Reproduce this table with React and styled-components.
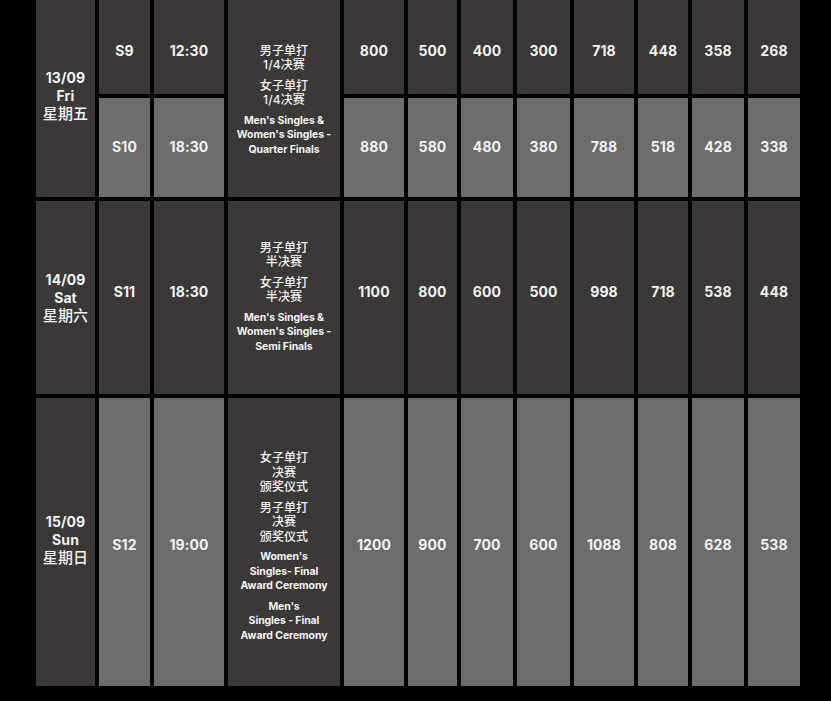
import React from 'react'
import styled, { createGlobalStyle } from 'styled-components'

const GlobalStyle = createGlobalStyle`
  html, body {
    margin: 0;
    padding: 0;
    background: #000;
  }
  body {
    font-family: Inter, "Noto Sans CJK SC", sans-serif;
    color: #f2f2f2;
  }
`

const DARK = '#3c3837'
const LIGHT = '#6d6c6c'

const Page = styled.div`
  width: 831px;
  height: 701px;
  background: #000;
  overflow: hidden;
`

const Grid = styled.div`
  display: grid;
  margin-left: 36px;
  grid-template-columns: 59px 51px 70px 112px 60px 49px 52px 53px 60px 50px 52px 52px;
  grid-template-rows: 94px 99px 193px 288px;
  gap: 4px;
`

// $shift moves the content off the vertical centre, as the original layout does
const Cell = styled.div`
  display: flex;
  flex-direction: column;
  align-items: center;
  justify-content: center;
  text-align: center;
  background: ${p => (p.$light ? LIGHT : DARK)};
  grid-row: ${p => p.$rows || 'auto'};
  padding-top: ${p => Math.max(0, 2 * (p.$shift || 0))}px;
  padding-bottom: ${p => Math.max(0, -2 * (p.$shift || 0))}px;
  font-weight: 700;
  font-size: 14px;
  letter-spacing: 0.1px;
`

const DateLine = styled.div`
  line-height: 18px;
  font-size: ${p => (p.$zh ? '15px' : '14px')};
  font-weight: ${p => (p.$zh ? 500 : 700)};
`

const EventStack = styled.div`
  display: flex;
  flex-direction: column;
  gap: 6px;
`

const ZhBlock = styled.div`
  font-size: 12px;
  font-weight: 500;
  line-height: 14.5px;
`

const EnBlock = styled.div`
  font-size: 10.5px;
  font-weight: 700;
  line-height: 14.5px;
  letter-spacing: -0.1px;
`

const days = [
  {
    date: '13/09', en: 'Fri', zh: '星期五', span: 2, dateShift: -3, eventShift: 2,
    event: {
      zh: [['男子单打', '1/4决赛'], ['女子单打', '1/4决赛']],
      en: [["Men's Singles &", "Women's Singles -", 'Quarter Finals']],
    },
    sessions: [
      { id: 'S9', time: '12:30', light: false, shift: 3, prices: [800, 500, 400, 300, 718, 448, 358, 268] },
      { id: 'S10', time: '18:30', light: true, shift: -1, prices: [880, 580, 480, 380, 788, 518, 428, 338] },
    ],
  },
  {
    date: '14/09', en: 'Sat', zh: '星期六', span: 1, dateShift: 0, eventShift: 0,
    event: {
      zh: [['男子单打', '半决赛'], ['女子单打', '半决赛']],
      en: [["Men's Singles &", "Women's Singles -", 'Semi Finals']],
    },
    sessions: [
      { id: 'S11', time: '18:30', light: false, shift: -6, prices: [1100, 800, 600, 500, 998, 718, 538, 448] },
    ],
  },
  {
    date: '15/09', en: 'Sun', zh: '星期日', span: 1, dateShift: -2, eventShift: 5,
    event: {
      zh: [['女子单打', '决赛', '颁奖仪式'], ['男子单打', '决赛', '颁奖仪式']],
      en: [
        ["Women's", 'Singles- Final', 'Award Ceremony'],
        ["Men's", 'Singles - Final', 'Award Ceremony'],
      ],
    },
    sessions: [
      { id: 'S12', time: '19:00', light: true, shift: 2, prices: [1200, 900, 700, 600, 1088, 808, 628, 538] },
    ],
  },
]

function Lines ({ lines }) {
  return lines.map(l => <div key={l}>{l}</div>)
}

function Day ({ day }) {
  const rows = `span ${day.span}`
  return day.sessions.map((s, i) => (
    <React.Fragment key={s.id}>
      {i === 0 && (
        <Cell $rows={rows} $shift={day.dateShift}>
          <DateLine>{day.date}</DateLine>
          <DateLine>{day.en}</DateLine>
          <DateLine $zh>{day.zh}</DateLine>
        </Cell>
      )}
      <Cell $light={s.light} $shift={s.shift}>{s.id}</Cell>
      <Cell $light={s.light} $shift={s.shift}>{s.time}</Cell>
      {i === 0 && (
        <Cell $rows={rows} $shift={day.eventShift}>
          <EventStack>
            {day.event.zh.map((b, k) => <ZhBlock key={'z' + k}><Lines lines={b} /></ZhBlock>)}
            {day.event.en.map((b, k) => <EnBlock key={'e' + k}><Lines lines={b} /></EnBlock>)}
          </EventStack>
        </Cell>
      )}
      {s.prices.map((p, k) => <Cell key={k} $light={s.light} $shift={s.shift}>{p}</Cell>)}
    </React.Fragment>
  ))
}

export default function App () {
  return <>
    <GlobalStyle />
    <Page>
      <Grid>
        {days.map(d => <Day key={d.date} day={d} />)}
      </Grid>
    </Page>
  </>
}
